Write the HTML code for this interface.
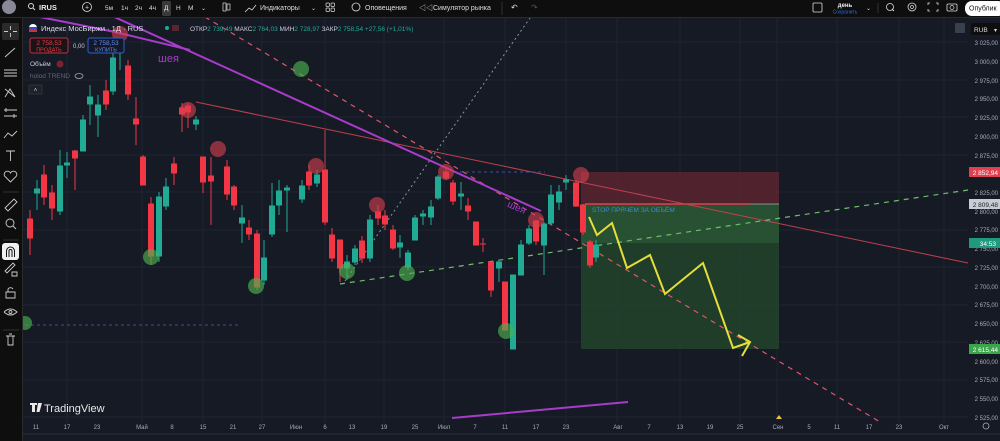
<!DOCTYPE html>
<html><head><meta charset="utf-8"><style>
html,body{margin:0;padding:0;width:1000px;height:441px;overflow:hidden;background:#0e0e0e;font-family:"Liberation Sans","Noto Sans CJK SC",sans-serif;}
svg text{font-family:"Liberation Sans","Noto Sans CJK SC",sans-serif;}
</style></head><body>
<svg width="1000" height="441" viewBox="0 0 1000 441" xmlns="http://www.w3.org/2000/svg">
<rect width="1000" height="441" fill="#0e0e0e"/>
<rect x="23" y="18" width="977" height="423" fill="#161a25"/>
<g stroke="#1f2431" stroke-width="1">
<line x1="23" y1="42" x2="968" y2="42"/><line x1="23" y1="80" x2="968" y2="80"/><line x1="23" y1="117" x2="968" y2="117"/><line x1="23" y1="155" x2="968" y2="155"/><line x1="23" y1="192" x2="968" y2="192"/><line x1="23" y1="230" x2="968" y2="230"/><line x1="23" y1="267" x2="968" y2="267"/><line x1="23" y1="305" x2="968" y2="305"/><line x1="23" y1="342" x2="968" y2="342"/><line x1="23" y1="380" x2="968" y2="380"/><line x1="23" y1="417" x2="968" y2="417"/>
<line x1="67" y1="18" x2="67" y2="422"/><line x1="142" y1="18" x2="142" y2="422"/><line x1="203" y1="18" x2="203" y2="422"/><line x1="262" y1="18" x2="262" y2="422"/><line x1="325" y1="18" x2="325" y2="422"/><line x1="384" y1="18" x2="384" y2="422"/><line x1="444" y1="18" x2="444" y2="422"/><line x1="505" y1="18" x2="505" y2="422"/><line x1="566" y1="18" x2="566" y2="422"/><line x1="617" y1="18" x2="617" y2="422"/><line x1="680" y1="18" x2="680" y2="422"/><line x1="740" y1="18" x2="740" y2="422"/><line x1="777" y1="18" x2="777" y2="422"/><line x1="837" y1="18" x2="837" y2="422"/><line x1="899" y1="18" x2="899" y2="422"/><line x1="944" y1="18" x2="944" y2="422"/>
</g>
<rect x="581" y="172" width="198" height="32" fill="#5a2430" opacity="0.85"/>
<rect x="581" y="204" width="198" height="39" fill="#2b5a36" opacity="0.85"/>
<rect x="581" y="243" width="198" height="106" fill="#22442c" opacity="0.85"/>
<line x1="585" y1="204" x2="750" y2="204" stroke="#e0404f" stroke-width="1.5"/>
<line x1="750" y1="204" x2="779" y2="204" stroke="#aaa" stroke-width="0.7"/>
<text x="592" y="212" font-size="6.5" fill="#3b8fd0">STOP ПРЯЧЕМ ЗА ОБЪЁМ</text>
<line x1="196" y1="102" x2="968" y2="263" stroke="#c0404e" stroke-width="1"/>
<line x1="325" y1="130" x2="325" y2="170" stroke="#c0404e" stroke-width="1"/>
<line x1="205" y1="17" x2="880" y2="422" stroke="#e0566a" stroke-width="1.2" stroke-dasharray="5,5"/>
<line x1="340" y1="284" x2="968" y2="190" stroke="#6fbf6a" stroke-width="1.2" stroke-dasharray="5,5"/>
<line x1="345" y1="281" x2="530" y2="18" stroke="#7c9aa0" stroke-width="1" stroke-dasharray="2,3"/>
<line x1="25" y1="325" x2="240" y2="325" stroke="#3b4fa0" stroke-width="1" stroke-dasharray="3,3"/>
<line x1="460" y1="172" x2="545" y2="172" stroke="#3b4fa0" stroke-width="1" stroke-dasharray="3,3"/>
<line x1="110" y1="15" x2="541" y2="211" stroke="#a73cc9" stroke-width="2"/>
<line x1="115" y1="32" x2="190" y2="50" stroke="#a73cc9" stroke-width="2"/>
<line x1="40" y1="17" x2="115" y2="32" stroke="#a73cc9" stroke-width="2"/>
<line x1="452" y1="418" x2="628" y2="402" stroke="#a73cc9" stroke-width="2"/>
<text x="158" y="62" font-size="11" fill="#a73cc9">шея</text>
<text x="506" y="210" font-size="10" fill="#a73cc9" transform="rotate(24 515 210)">шея</text>
<g stroke-width="1">
<g stroke="#f23645" fill="#f23645">
<line x1="30" y1="210" x2="30" y2="255"/><rect x="27.5" y="219" width="5" height="19"/>
<line x1="44" y1="165" x2="44" y2="205"/><rect x="41.5" y="175" width="5" height="22"/>
<line x1="52" y1="185" x2="52" y2="220"/><rect x="49.5" y="193" width="5" height="15"/>
<line x1="75" y1="150" x2="75" y2="190"/><rect x="72.5" y="151" width="5" height="7"/>
<line x1="106" y1="80" x2="106" y2="110"/><rect x="103.5" y="91" width="5" height="13"/>
<line x1="128" y1="60" x2="128" y2="100"/><rect x="125.5" y="66" width="5" height="28"/>
<line x1="136" y1="97" x2="136" y2="145"/><rect x="133.5" y="119" width="5" height="5"/>
<line x1="143" y1="155" x2="143" y2="185"/><rect x="140.5" y="157" width="5" height="28"/>
<line x1="151" y1="197" x2="151" y2="265"/><rect x="148.5" y="204" width="5" height="52"/>
<line x1="174" y1="157" x2="174" y2="185"/><rect x="171.5" y="164" width="5" height="9"/>
<line x1="182" y1="103" x2="182" y2="132"/><rect x="179.5" y="108" width="5" height="6"/>
<line x1="188" y1="103" x2="188" y2="128"/><rect x="185.5" y="106" width="5" height="6"/>
<line x1="203" y1="157" x2="203" y2="193"/><rect x="200.5" y="157" width="5" height="25"/>
<line x1="211" y1="157" x2="211" y2="225"/><rect x="208.5" y="176" width="5" height="5"/>
<line x1="227" y1="160" x2="227" y2="200"/><rect x="224.5" y="167" width="5" height="27"/>
<line x1="234" y1="185" x2="234" y2="210"/><rect x="231.5" y="187" width="5" height="18"/>
<line x1="249" y1="220" x2="249" y2="240"/><rect x="246.5" y="228" width="5" height="6"/>
<line x1="257" y1="230" x2="257" y2="290"/><rect x="254.5" y="234" width="5" height="53"/>
<line x1="309" y1="165" x2="309" y2="190"/><rect x="306.5" y="172" width="5" height="13"/>
<line x1="325" y1="165" x2="325" y2="225"/><rect x="322.5" y="170" width="5" height="52"/>
<line x1="332" y1="228" x2="332" y2="262"/><rect x="329.5" y="235" width="5" height="23"/>
<line x1="340" y1="240" x2="340" y2="282"/><rect x="337.5" y="240" width="5" height="28"/>
<line x1="362" y1="236" x2="362" y2="263"/><rect x="359.5" y="241" width="5" height="17"/>
<line x1="378" y1="205" x2="378" y2="225"/><rect x="375.5" y="212" width="5" height="6"/>
<line x1="385" y1="210" x2="385" y2="230"/><rect x="382.5" y="216" width="5" height="8"/>
<line x1="393" y1="225" x2="393" y2="250"/><rect x="390.5" y="230" width="5" height="18"/>
<line x1="446" y1="168" x2="446" y2="180"/><rect x="443.5" y="172" width="5" height="6"/>
<line x1="453" y1="180" x2="453" y2="205"/><rect x="450.5" y="183" width="5" height="18"/>
<line x1="468" y1="198" x2="468" y2="220"/><rect x="465.5" y="206" width="5" height="5"/>
<line x1="476" y1="222" x2="476" y2="245"/><rect x="473.5" y="222" width="5" height="23"/>
<line x1="483" y1="238" x2="483" y2="252"/><line x1="480" y1="244" x2="486" y2="244"/>
<line x1="491" y1="262" x2="491" y2="297"/><rect x="488.5" y="262" width="5" height="28"/>
<line x1="505" y1="282" x2="505" y2="330"/><rect x="502.5" y="282" width="5" height="48"/>
<line x1="536" y1="220" x2="536" y2="245"/><rect x="533.5" y="221" width="5" height="20"/>
<line x1="576" y1="180" x2="576" y2="207"/><rect x="573.5" y="183" width="5" height="23"/>
<line x1="583" y1="204" x2="583" y2="235"/><rect x="580.5" y="205" width="5" height="27"/>
<line x1="590" y1="240" x2="590" y2="268"/><rect x="587.5" y="242" width="5" height="23"/>
</g>
<g stroke="#22ab94" fill="#22ab94">
<line x1="37" y1="180" x2="37" y2="210"/><rect x="34.5" y="189" width="5" height="4"/>
<line x1="60" y1="150" x2="60" y2="215"/><rect x="57.5" y="166" width="5" height="45"/>
<line x1="67" y1="152" x2="67" y2="178"/><rect x="64.5" y="163" width="5" height="2"/>
<line x1="83" y1="115" x2="83" y2="150"/><rect x="80.5" y="120" width="5" height="31"/>
<line x1="90" y1="85" x2="90" y2="125"/><rect x="87.5" y="97" width="5" height="7"/>
<line x1="98" y1="95" x2="98" y2="137"/><rect x="95.5" y="105" width="5" height="10"/>
<line x1="113" y1="40" x2="113" y2="95"/><rect x="110.5" y="58" width="5" height="33"/>
<line x1="120" y1="45" x2="120" y2="70"/>
<line x1="159" y1="192" x2="159" y2="262"/><rect x="156.5" y="197" width="5" height="59"/>
<line x1="166" y1="178" x2="166" y2="210"/><rect x="163.5" y="187" width="5" height="19"/>
<line x1="196" y1="116" x2="196" y2="130"/><rect x="193.5" y="120" width="5" height="4"/>
<line x1="242" y1="205" x2="242" y2="243"/><rect x="239.5" y="218" width="5" height="5"/>
<line x1="264" y1="240" x2="264" y2="285"/><rect x="261.5" y="258" width="5" height="22"/>
<line x1="272" y1="183" x2="272" y2="237"/><rect x="269.5" y="206" width="5" height="28"/>
<line x1="279" y1="180" x2="279" y2="215"/><rect x="276.5" y="191" width="5" height="14"/>
<line x1="287" y1="185" x2="287" y2="232"/><rect x="284.5" y="188" width="5" height="2"/>
<line x1="302" y1="180" x2="302" y2="203"/><rect x="299.5" y="186" width="5" height="13"/>
<line x1="317" y1="170" x2="317" y2="187"/><rect x="314.5" y="175" width="5" height="8"/>
<line x1="347" y1="255" x2="347" y2="280"/><rect x="344.5" y="262" width="5" height="6"/>
<line x1="355" y1="245" x2="355" y2="265"/><rect x="352.5" y="249" width="5" height="13"/>
<line x1="370" y1="215" x2="370" y2="262"/><rect x="367.5" y="220" width="5" height="38"/>
<line x1="400" y1="235" x2="400" y2="258"/><rect x="397.5" y="243" width="5" height="4"/>
<line x1="408" y1="250" x2="408" y2="270"/><rect x="405.5" y="253" width="5" height="14"/>
<line x1="415" y1="215" x2="415" y2="240"/><rect x="412.5" y="218" width="5" height="22"/>
<line x1="423" y1="210" x2="423" y2="225"/><rect x="420.5" y="214" width="5" height="2"/>
<line x1="431" y1="200" x2="431" y2="225"/><rect x="428.5" y="207" width="5" height="10"/>
<line x1="438" y1="175" x2="438" y2="200"/><rect x="435.5" y="177" width="5" height="21"/>
<line x1="461" y1="182" x2="461" y2="210"/><rect x="458.5" y="194" width="5" height="2"/>
<line x1="499" y1="260" x2="499" y2="282"/><rect x="496.5" y="262" width="5" height="6"/>
<line x1="513" y1="275" x2="513" y2="349"/><rect x="510.5" y="275" width="5" height="74"/>
<line x1="521" y1="240" x2="521" y2="275"/><rect x="518.5" y="245" width="5" height="30"/>
<line x1="529" y1="225" x2="529" y2="245"/><rect x="526.5" y="229" width="5" height="14"/>
<line x1="544" y1="222" x2="544" y2="275"/><rect x="541.5" y="224" width="5" height="21"/>
<line x1="551" y1="185" x2="551" y2="225"/><rect x="548.5" y="195" width="5" height="28"/>
<line x1="559" y1="185" x2="559" y2="210"/><rect x="556.5" y="192" width="5" height="10"/>
<line x1="566" y1="175" x2="566" y2="190"/><rect x="563.5" y="180" width="5" height="2"/>
<line x1="596" y1="240" x2="596" y2="262"/><rect x="593.5" y="245" width="5" height="12"/>
</g>
</g>
<g fill="#d84050" opacity="0.6">
<circle cx="188" cy="110" r="8"/><circle cx="218" cy="149" r="8"/><circle cx="316" cy="166" r="8"/><circle cx="377" cy="205" r="8"/><circle cx="446" cy="172" r="8"/><circle cx="536" cy="220" r="8"/><circle cx="581" cy="175" r="8"/><circle cx="120" cy="34" r="8"/>
</g>
<g fill="#4caf50" opacity="0.65">
<circle cx="301" cy="69" r="8"/><circle cx="151" cy="257" r="8"/><circle cx="256" cy="286" r="8"/><circle cx="347" cy="271" r="8"/><circle cx="407" cy="273" r="8"/><circle cx="506" cy="331" r="8"/><circle cx="25" cy="323" r="7"/>
</g>
<polyline points="589,217 597,235 612,223 627,268 650,255 665,294 703,263 733,348 750,342" fill="none" stroke="#e6de3a" stroke-width="2"/>
<polyline points="738,335 750,342 742,356" fill="none" stroke="#e6de3a" stroke-width="2"/>
<rect x="968" y="18" width="32" height="412" fill="#161a25"/>
<g font-size="6" fill="#aab" text-anchor="end">
<text x="998" y="45">3 025,00</text><text x="998" y="64">3 000,00</text><text x="998" y="83">2 975,00</text><text x="998" y="101">2 950,00</text><text x="998" y="120">2 925,00</text><text x="998" y="139">2 900,00</text><text x="998" y="158">2 875,00</text><text x="998" y="195">2 825,00</text><text x="998" y="214">2 800,00</text><text x="998" y="232">2 775,00</text><text x="998" y="251">2 750,00</text><text x="998" y="270">2 725,00</text><text x="998" y="289">2 700,00</text><text x="998" y="307">2 675,00</text><text x="998" y="326">2 650,00</text><text x="998" y="345">2 625,00</text><text x="998" y="364">2 600,00</text><text x="998" y="382">2 575,00</text><text x="998" y="401">2 550,00</text><text x="998" y="420">2 525,00</text>
</g>
<rect x="969" y="167" width="31" height="10" fill="#e0404f"/><text x="998" y="175" font-size="6.5" fill="#fff" text-anchor="end">2 852,94</text>
<rect x="969" y="199" width="31" height="10" fill="#c8ccd4"/><text x="998" y="207" font-size="6.5" fill="#222" text-anchor="end">2 809,48</text>
<rect x="969" y="238" width="31" height="10" fill="#1f9a7e"/><text x="996" y="246" font-size="6.5" fill="#fff" text-anchor="end">34:53</text>
<rect x="969" y="344" width="31" height="10" fill="#3aa64a"/><text x="998" y="352" font-size="6.5" fill="#fff" text-anchor="end">2 615,44</text>
<rect x="971" y="23" width="29" height="12" rx="2" fill="#0e0e0e"/><text x="974" y="32" font-size="6.5" fill="#ddd">RUB</text><text x="994" y="32" font-size="6" fill="#ddd">▾</text>
<rect x="955" y="23" width="10" height="10" rx="1" fill="#3a3f4c"/>
<rect x="23" y="422" width="977" height="13" fill="#161a25"/>
<line x1="23" y1="434" x2="1000" y2="434" stroke="#2a2e39"/>
<g font-size="6" fill="#aab" text-anchor="middle">
<text x="36" y="429">11</text><text x="67" y="429">17</text><text x="97" y="429">23</text><text x="142" y="429">Май</text><text x="172" y="429">8</text><text x="203" y="429">15</text><text x="233" y="429">21</text><text x="262" y="429">27</text><text x="296" y="429">Июн</text><text x="325" y="429">6</text><text x="352" y="429">13</text><text x="384" y="429">19</text><text x="415" y="429">25</text><text x="444" y="429">Июл</text><text x="475" y="429">7</text><text x="505" y="429">11</text><text x="536" y="429">17</text><text x="566" y="429">23</text><text x="618" y="429">Авг</text><text x="649" y="429">7</text><text x="680" y="429">13</text><text x="710" y="429">19</text><text x="740" y="429">25</text><text x="778" y="429">Сен</text><text x="809" y="429">5</text><text x="837" y="429">11</text><text x="869" y="429">17</text><text x="899" y="429">23</text><text x="944" y="429">Окт</text>
</g>
<polygon points="776,419 779,415 782,419" fill="#e6c53a"/>
<circle cx="986" cy="426" r="3" fill="none" stroke="#aab" stroke-width="0.8"/>
<path d="M30 403h7v2h-2v7h-3v-7h-2z M38 403h4l-2.5 9h-3z" fill="#e8e8e8"/>
<text x="44" y="412" font-size="11" fill="#e8e8e8">TradingView</text>
<circle cx="33" cy="28" r="4" fill="#fff"/><rect x="29" y="27" width="8" height="2.5" fill="#2b4fd0"/><rect x="29" y="29.5" width="8" height="2.5" fill="#d03030"/>
<text x="41" y="31" font-size="7.5" fill="#dde">Индекс МосБиржи · 1Д · RUS</text>
<circle cx="167" cy="28" r="2" fill="#22ab94"/><rect x="172" y="25" width="7" height="6" fill="#5a2430"/>
<text x="190" y="31" font-size="6.5" fill="#ccd">ОТКР<tspan fill="#22ab94">2 739,49 </tspan>МАКС<tspan fill="#22ab94">2 764,03 </tspan>МИН<tspan fill="#22ab94">2 728,97 </tspan>ЗАКР<tspan fill="#22ab94">2 758,54 +27,56 (+1,01%)</tspan></text>
<rect x="30" y="38" width="38" height="15" rx="2" fill="#1a1416" stroke="#c03040"/><text x="49" y="45" font-size="6.5" fill="#f23645" text-anchor="middle">2 758,53</text><text x="49" y="51.5" font-size="5.5" fill="#f23645" text-anchor="middle">ПРОДАТЬ</text>
<text x="73" y="48" font-size="6" fill="#ccd">0,00</text>
<rect x="88" y="38" width="36" height="15" rx="2" fill="#141828" stroke="#2b5fd0"/><text x="106" y="45" font-size="6.5" fill="#5b8ff0" text-anchor="middle">2 758,53</text><text x="106" y="51.5" font-size="5.5" fill="#5b8ff0" text-anchor="middle">КУПИТЬ</text>
<text x="30" y="66" font-size="6.5" fill="#ccd">Объём</text><circle cx="60" cy="64" r="3.5" fill="#7a2230"/>
<text x="30" y="78" font-size="6.5" fill="#667">holod TREND</text><ellipse cx="79" cy="76" rx="4" ry="2.5" fill="none" stroke="#aab" stroke-width="0.8"/>
<rect x="29" y="85" width="13" height="9" rx="1" fill="#1e222d" stroke="#333"/><text x="35.5" y="92" font-size="6" fill="#ccd" text-anchor="middle">˄</text>
<rect x="0" y="0" width="1000" height="17" fill="#0e0e0e"/>
<line x1="0" y1="17.5" x2="1000" y2="17.5" stroke="#2a2a2a"/>
<circle cx="9" cy="7" r="7" fill="#889"/>
<circle cx="31" cy="6" r="2.5" fill="none" stroke="#ddd" stroke-width="1"/><line x1="33" y1="8" x2="35" y2="10" stroke="#ddd"/>
<text x="39" y="10" font-size="7.5" font-weight="bold" fill="#eee">IRUS</text>
<circle cx="87" cy="7" r="4.5" fill="none" stroke="#ddd" stroke-width="0.8"/><text x="87" y="9.5" font-size="7" fill="#ddd" text-anchor="middle">+</text>
<g font-size="6.5" fill="#ddd"><text x="105" y="10">5м</text><text x="121" y="10">1ч</text><text x="135" y="10">2ч</text><text x="149" y="10">4ч</text></g>
<rect x="162" y="1" width="9" height="15" rx="1.5" fill="#3a3a3a"/><text x="164" y="10" font-size="6.5" fill="#eee">Д</text>
<text x="176" y="10" font-size="6.5" fill="#ddd">Н</text><text x="188" y="10" font-size="6.5" fill="#ddd">М</text><text x="201" y="10" font-size="6" fill="#ddd">⌄</text>
<rect x="223" y="3" width="3" height="8" fill="none" stroke="#ddd" stroke-width="0.7"/><rect x="227" y="4" width="3" height="6" fill="none" stroke="#ddd" stroke-width="0.7"/>
<path d="M245 12l4-4 3 2 4-5" stroke="#ddd" fill="none" stroke-width="0.8"/><text x="260" y="10" font-size="7" fill="#ddd">Индикаторы</text><text x="311" y="10" font-size="6" fill="#ddd">⌄</text>
<g fill="none" stroke="#ddd" stroke-width="0.7"><rect x="326" y="3" width="3.5" height="3.5" rx="1"/><rect x="331" y="3" width="3.5" height="3.5" rx="1"/><rect x="326" y="8" width="3.5" height="3.5" rx="1"/><rect x="331" y="8" width="3.5" height="3.5" rx="1"/></g>
<circle cx="356" cy="7" r="4" fill="none" stroke="#ddd" stroke-width="0.8"/><text x="365" y="10" font-size="7" fill="#ddd">Оповещения</text>
<text x="419" y="10" font-size="7" fill="#ddd">◁◁</text><text x="433" y="10" font-size="7" fill="#ddd">Симулятор рынка</text>
<line x1="502" y1="2" x2="502" y2="15" stroke="#333"/>
<text x="511" y="10" font-size="8" fill="#ddd">↶</text><text x="531" y="10" font-size="8" fill="#555">↷</text>
<rect x="813" y="3" width="9" height="9" rx="1" fill="none" stroke="#ddd" stroke-width="0.8"/>
<text x="845" y="7" font-size="6" font-weight="bold" fill="#eee" text-anchor="middle">день</text><text x="845" y="13.5" font-size="5" fill="#2b6ae0" text-anchor="middle">Сохранить</text>
<text x="866" y="10" font-size="6" fill="#ddd">⌄</text><line x1="878" y1="3" x2="878" y2="13" stroke="#333"/>
<circle cx="890" cy="7" r="3.5" fill="none" stroke="#ddd" stroke-width="0.8"/><line x1="892" y1="9" x2="894" y2="11" stroke="#ddd"/>
<circle cx="912" cy="7" r="4" fill="none" stroke="#ddd" stroke-width="0.8"/><circle cx="912" cy="7" r="1.5" fill="none" stroke="#ddd" stroke-width="0.7"/>
<path d="M928 5v-2h2M936 3h2v2M938 9v2h-2M930 11h-2v-2" fill="none" stroke="#ddd" stroke-width="0.8"/>
<rect x="947" y="4" width="10" height="7" rx="1" fill="none" stroke="#ddd" stroke-width="0.8"/><circle cx="952" cy="7.5" r="2" fill="none" stroke="#ddd" stroke-width="0.7"/>
<rect x="965" y="1" width="40" height="15" rx="7" fill="#fff"/><text x="969" y="10.5" font-size="7" fill="#111">Опублик</text>
<rect x="0" y="18" width="22" height="423" fill="#0e0e0e"/>
<line x1="22.5" y1="18" x2="22.5" y2="441" stroke="#2a2a2a"/>
<rect x="2" y="23" width="17" height="17" rx="2" fill="#2a2a2a"/>
<g stroke="#ccc" stroke-width="0.9" fill="none">
<path d="M10.5 26v4M10.5 33v4M4 31.5h4M13 31.5h4"/>
<path d="M5 57l10-9"/>
<path d="M4 70h13M4 73h13M4 76h13"/>
<path d="M5 97l5-8 5 8M5 89l10 8"/>
<path d="M4 110h13M4 116h13M6 108v4M14 114v4"/>
<path d="M4 138l4-5 4 3 5-5"/>
<path d="M6 151h9M10.5 151v10"/>
<path d="M10.5 182l-6-6a3 3 0 0 1 6-3 3 3 0 0 1 6 3z"/>
<path d="M5 208l9-9 3 3-9 9z"/>
<circle cx="10" cy="223" r="4"/><path d="M13 226l3 3"/>
<path d="M5 271l8-8 2 2-8 8zM12 272h5v4h-5z"/>
<path d="M6 292h9v6h-9zM8 292v-3a3 3 0 0 1 5 0"/>
<path d="M4 312q6.5-6 13 0q-6.5 6-13 0"/><circle cx="10.5" cy="312" r="1.5"/>
<path d="M6 336h9M8 336v9h5v-9M9 334h3"/>
</g>
<line x1="3" y1="192" x2="19" y2="192" stroke="#333"/><line x1="3" y1="240" x2="19" y2="240" stroke="#333"/><line x1="3" y1="330" x2="19" y2="330" stroke="#333"/>
<rect x="2" y="243" width="17" height="17" rx="3" fill="#f0f0f0"/>
<path d="M6.5 257v-6a4 4 0 0 1 8 0v6M9 257v-6a1.5 1.5 0 0 1 3 0v6" fill="none" stroke="#111" stroke-width="1"/>
</svg>
</body></html>
